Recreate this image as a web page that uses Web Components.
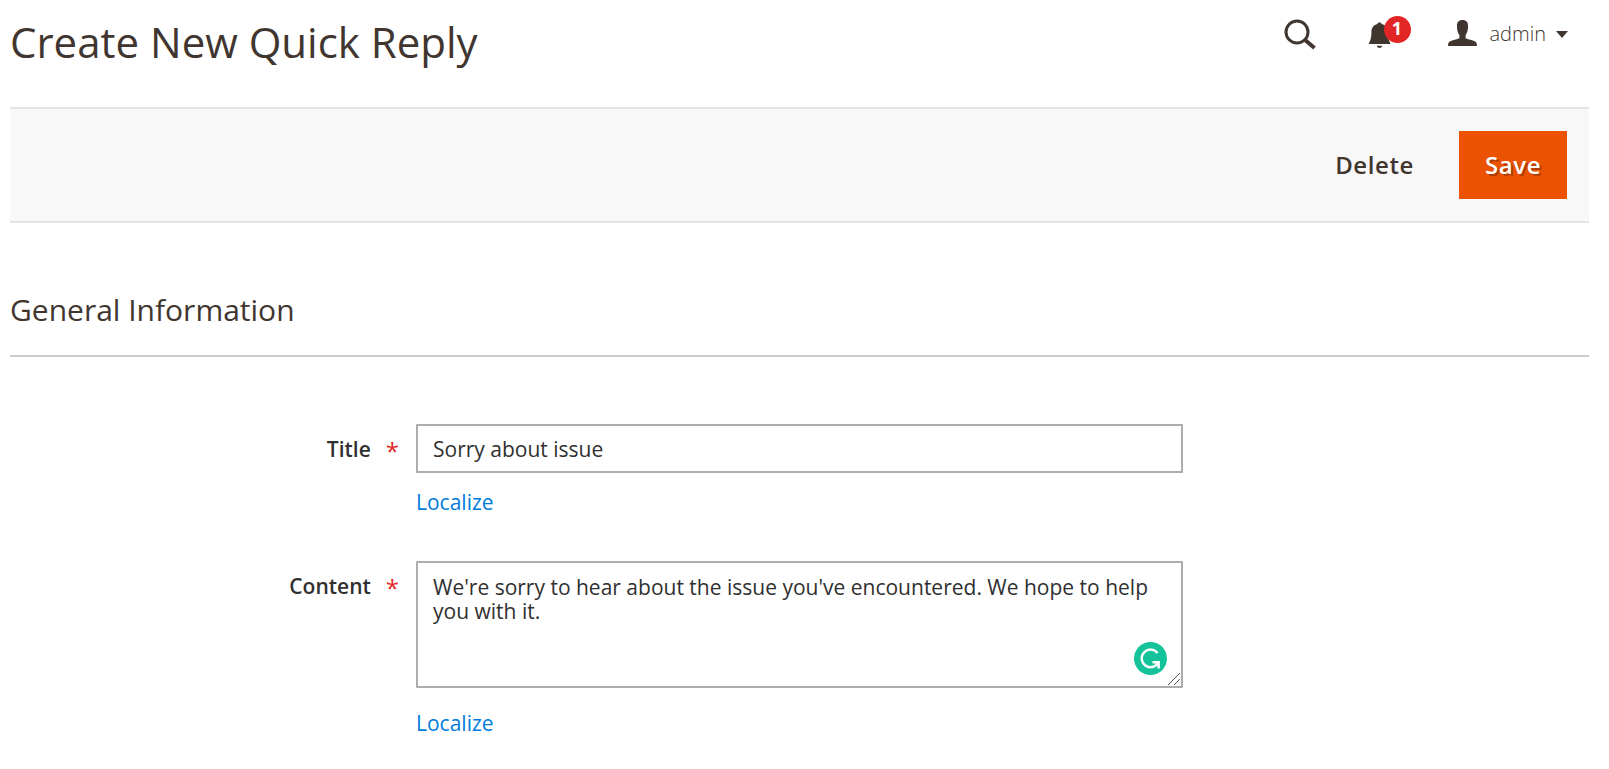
<!DOCTYPE html>
<html lang="en">
<head>
<meta charset="utf-8">
<title>Create New Quick Reply</title>
<style>
  body { margin: 0; background: #fff; color: #41362f; font-family: "Open Sans", "Noto Sans", sans-serif; }
</style>
</head>
<body>
<quick-reply-page></quick-reply-page>

<script>
const define = (name, html, setup) => {
  const template = document.createElement("template");
  template.innerHTML = html;
  customElements.define(name, class extends HTMLElement {
    constructor() {
      super();
      this.attachShadow({ mode: "open" }).append(template.content.cloneNode(true));
    }
    connectedCallback() { if (setup) setup(this, this.shadowRoot); }
  });
};

define("admin-header", `
  <style>
    :host { display: flex; justify-content: space-between; align-items: flex-start; height: 107px; }
    h1 { margin: 13px 0 0; font-size: 42px; line-height: 58px; font-weight: 400; }
    nav { display: flex; align-items: center; padding: 14px 21px 0 0; }
    button, a { font: inherit; color: inherit; background: none; border: 0; padding: 0; cursor: pointer; text-decoration: none; }
    .search { display: block; height: 40px; margin-right: 52px; }
    .bell { position: relative; display: block; width: 44px; height: 40px; margin-right: 36px; }
    svg { display: block; }
    .badge { position: absolute; left: 16px; top: 2px; width: 27px; height: 27px; border-radius: 50%;
             background: #e22626; color: #fff; font-size: 18px; line-height: 25px; font-weight: 700; text-align: center; }
    .user { display: flex; align-items: center; height: 40px; font-size: 20px; line-height: 28px; font-weight: 300; }
    .user span { margin: 0 10px 0 13px; }
  </style>
  <h1><slot></slot></h1>
  <nav aria-label="Account">
    <button class="search" type="button" aria-label="Search">
      <svg width="32" height="40" viewBox="0 0 32 40" fill="none" stroke="#41362f">
        <circle cx="13" cy="18" r="11" stroke-width="3"/><path d="M20.500 25.500 30.500 34" stroke-width="4"/>
      </svg>
    </button>
    <a class="bell" href="#notifications" aria-label="Notifications">
      <svg width="24" height="40" viewBox="0 0 24 40" fill="#41362f">
        <path d="M11.500 8.500c1.300 0 2 .7 2.200 1.600 3.800 1 6 3.700 6 8.200 0 5.600 1 8.300 3 11.700H.500c2-3.400 2.900-6.100 2.900-11.700 0-4.500 2.200-7.200 6-8.200.1-.9.800-1.600 2.100-1.600zM8.700 31.800h5.600c-.3 1.300-1.300 2.200-2.800 2.200s-2.500-.9-2.800-2.200z"/>
      </svg>
      <span class="badge">1</span>
    </a>
    <button class="user" type="button">
      <svg width="29" height="40" viewBox="0 0 29 40" fill="#41362f">
        <path d="M14.500 6C18.500 6 20.300 8.200 20 12.500c0 4.500-1 6.500-2.400 8.500v3.200c3.600 1.400 7.800 2.100 10 3.500 1 .8 1.400 2.200 1.400 4.300H0c0-2.100.4-3.500 1.400-4.300 2.200-1.400 6.400-2.100 10-3.500V21C10 19 9 17 9 12.500 8.700 8.200 10.500 6 14.500 6z"/>
      </svg>
      <span>admin</span>
      <svg width="12" height="8" viewBox="0 0 12 8" fill="#41362f"><path d="M0 1h12L6 8z"/></svg>
    </button>
  </nav>`);

define("action-bar", `
  <style>
    :host { display: flex; justify-content: flex-end; align-items: center; padding: 22px;
            background: #f8f8f8; border: solid #e3e3e3; border-width: 2px 0; gap: 20px; }
  </style>
  <slot></slot>`);

define("action-button", `
  <style>
    :host { display: block; }
    button { display: block; min-width: 108px; height: 68px; padding: 0 25px; border: 0; background: none; color: #41362f;
             font: 600 24px/34px "Open Sans", "Noto Sans", sans-serif; letter-spacing: .025em; cursor: pointer; }
    :host([primary]) button { background: #eb5202; color: #fff; text-shadow: 2px 2px 0 rgba(0,0,0,.25); }
  </style>
  <button type="button"><slot></slot></button>`);

define("form-section", `
  <style>
    :host { display: block; padding-top: 66px; }
    h2 { margin: 0 0 67px; padding-bottom: 24px; border-bottom: 2px solid #ccc;
         font-size: 30px; line-height: 42px; font-weight: 400; }
    form { display: grid; gap: 44px; }
  </style>
  <section><h2></h2><form><slot></slot></form></section>`,
  (host, root) => { root.querySelector("h2").textContent = host.getAttribute("heading"); });

define("assistant-badge", `
  <style>
    :host { display: block; }
    button { display: block; padding: 0; border: 0; background: none; cursor: pointer; }
    svg { display: block; }
  </style>
  <button type="button" aria-label="Writing assistant">
    <svg width="33" height="33" viewBox="0 0 33 33" fill="none" stroke="#fff" stroke-width="2.400">
      <circle cx="16.500" cy="16.500" r="16.500" fill="#15c39a" stroke="none"/>
      <path d="M23.500 11A8.800 8.800 0 1 0 24 21M18.500 20.200h6.200v6.300"/>
    </svg>
  </button>`);

const fieldStyle = `
  <style>
    :host { display: grid; grid-template-columns: 9fr 17fr 9fr; }
    label { display: flex; justify-self: end; align-items: center; height: 30px; padding: 10px 17px 0 0; color: #303030; font-size: 21px; line-height: 30px; font-weight: 600; }
    label span { margin-left: 15px; padding-top: 4px; color: #e22626; font-size: 24px; font-weight: 400; }
    .control { position: relative; }
    input, textarea { display: block; box-sizing: border-box; width: 100%; margin: 0; padding: 0 15px;
      border: 2px solid #adadad; border-radius: 1px; background: #fff; color: #303030; outline: 0;
      font: 400 21px/24px "Open Sans", "Noto Sans", sans-serif; }
    input { height: 49px; }
    textarea { height: 127px; padding-top: 12px; resize: vertical; overflow: auto; }
    textarea::-webkit-scrollbar { width: 15px; height: 15px; }
    textarea::-webkit-resizer {
      background: url("data:image/svg+xml,%3Csvg xmlns='http://www.w3.org/2000/svg' width='15' height='15' fill='none' stroke='%23555'%3E%3Cpath d='M2 14 14 2M8 14 14 8'/%3E%3C/svg%3E") no-repeat right bottom; }
    assistant-badge { position: absolute; right: 16px; bottom: 13px; }
    a { display: block; width: max-content; margin-top: 14px; color: #007bdb; font-size: 21px; line-height: 30px; text-decoration: none; font-weight: 400; }
    .area + a { margin-top: 20px; }
  </style>`;

define("text-field", fieldStyle + `
  <label for="f"><slot></slot><span>*</span></label>
  <div><div class="control"><input id="f" type="text" required></div><a href="#localize">Localize</a></div>`,
  (host, root) => { root.querySelector("input").value = host.getAttribute("value"); });

define("area-field", fieldStyle + `
  <label for="f"><slot></slot><span>*</span></label>
  <div><div class="control area"><textarea id="f" required spellcheck="false"></textarea><assistant-badge></assistant-badge></div><a href="#localize">Localize</a></div>`,
  (host, root) => { root.querySelector("textarea").value = host.getAttribute("value"); });

define("quick-reply-page", `
  <style>
    :host { display: block; padding: 0 20px 0 10px; }
  </style>
  <admin-header>Create New Quick Reply</admin-header>
  <action-bar>
    <action-button>Delete</action-button>
    <action-button primary>Save</action-button>
  </action-bar>
  <main>
    <form-section heading="General Information">
      <text-field value="Sorry about issue">Title</text-field>
      <area-field value="We're sorry to hear about the issue you've encountered. We hope to help you with it.">Content</area-field>
    </form-section>
  </main>`);
</script>
</body>
</html>
